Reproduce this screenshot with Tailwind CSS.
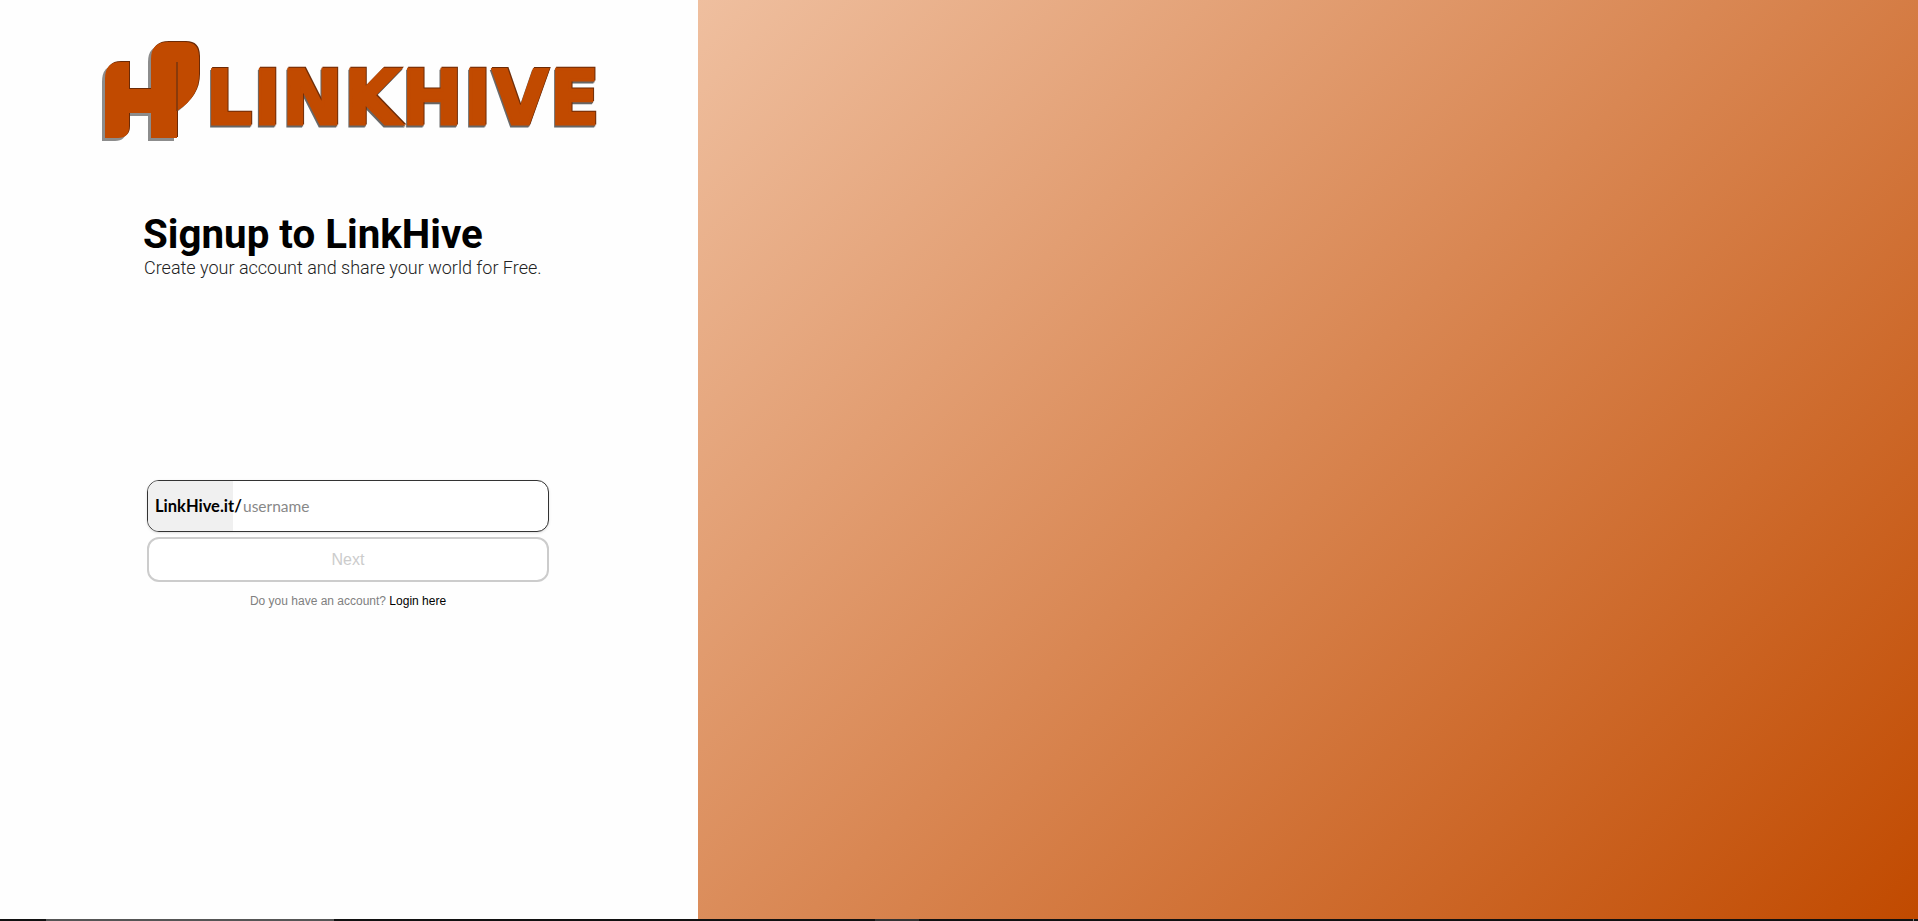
<!DOCTYPE html>
<html lang="en">
<head>
    <meta charset="UTF-8">
    <meta name="viewport" content="width=device-width, initial-scale=1.0">
    <title>LinkHive - Signup</title>
    <script src="https://cdn.jsdelivr.net/npm/@tailwindcss/browser@4"></script>
</head>
<body class="bg-white font-['Roboto',sans-serif] overflow-hidden">
    <div class="flex flex-col h-[921px]">
        <div class="flex flex-1 min-h-0">
            <!-- Form side -->
            <div class="w-[698px] bg-[#fefefe] flex flex-col">
                <div class="flex items-start h-[146px] pl-[97px] pt-[36px] blur-[0.4px]">
                    <svg class="w-[112px] h-[112px] shrink-0" viewBox="97 36 112 112">
                        <path fill="#8c8c8c" d="M102 82 Q102 65 117 65 L126 65 L126 92 L148 92 L148 62 Q148 45 165 45 L182 45 Q196 45 196 60 L196 78 Q196 100 174 114 L174 141 L148 141 L148 116 L126 116 L126 130 Q126 141 115 141 L102 141 Z"/>
                        <path fill="#6b2a06" d="M106 78 Q106 61 121 61 L130 61 L130 88 L152 88 L152 58 Q152 41 169 41 L186 41 Q200 41 200 56 L200 74 Q200 96 178 110 L178 137 L152 137 L152 112 L130 112 L130 126 Q130 137 119 137 L106 137 Z"/>
                        <path fill="#c14a00" d="M105 79 Q105 62 120 62 L129 62 L129 89 L151 89 L151 59 Q151 42 168 42 L185 42 Q199 42 199 57 L199 75 Q199 97 177 111 L177 138 L151 138 L151 113 L129 113 L129 127 Q129 138 118 138 L105 138 Z"/>
                        <path fill="#8a3a0a" d="M176 62 L178 62 L178 111 L176 111 Z"/>
                    </svg>
                    <span class="font-['DejaVu_Sans',sans-serif] font-bold text-[74px] leading-none text-[#c14a00] origin-left scale-x-[0.97] ml-[-3px] mt-[25px] tracking-[2px] [-webkit-text-stroke:3px_#c14a00] [filter:drop-shadow(1px_-1px_0_#6b2a06)_drop-shadow(-1px_2px_0_#666)]">LINKHIVE</span>
                </div>
                <div class="pl-[143px] pt-[66px]">
                    <h1 class="text-[40.3px] font-bold leading-[45px] text-black">Signup to LinkHive</h1>
                    <p class="text-[18px] font-light leading-[22px] text-[#222] pl-[1px]">Create your account and share your world for Free.</p>
                </div>
                <div class="w-[402px] ml-[147px] mt-[201px] flex flex-col">
                    <div class="flex h-[52px] border border-[#333] rounded-[12px] overflow-hidden bg-white shadow-sm">
                        <span class="w-[85px] shrink-0 bg-[#f0f0f0] flex items-center pl-[7px] pt-[1px] font-['Lato',sans-serif] font-bold text-[16.5px] text-black whitespace-nowrap">LinkHive.it/</span>
                        <input class="flex-1 min-w-0 pl-[10px] pt-[2px] outline-none font-['Lato',sans-serif] text-[15.5px] placeholder:text-[#888]" placeholder="username">
                    </div>
                    <button class="h-[45px] mt-[5px] border-2 border-[#ccc] rounded-[12px] bg-white text-[#ccc] font-['Liberation_Sans',sans-serif] text-[16px]">Next</button>
                    <p class="mt-[10px] text-center font-['Liberation_Sans',sans-serif] text-[12px] text-[#808080]">Do you have an account? <a href="#" class="text-black">Login here</a></p>
                </div>
            </div>
            <!-- Gradient side -->
            <div class="flex-1 bg-[linear-gradient(135deg,#efbf9f,#c14a00)]"></div>
        </div>
        <div class="h-[2px] bg-[#111] flex shrink-0">
            <div class="w-[46px]"></div>
            <div class="w-[288px] bg-[#555]"></div>
            <div class="w-[541px]"></div>
            <div class="w-[44px] bg-[#333]"></div>
            <div class="w-[994px]"></div>
            <div class="w-[1px] bg-[#888]"></div>
        </div>
    </div>
</body>
</html>
